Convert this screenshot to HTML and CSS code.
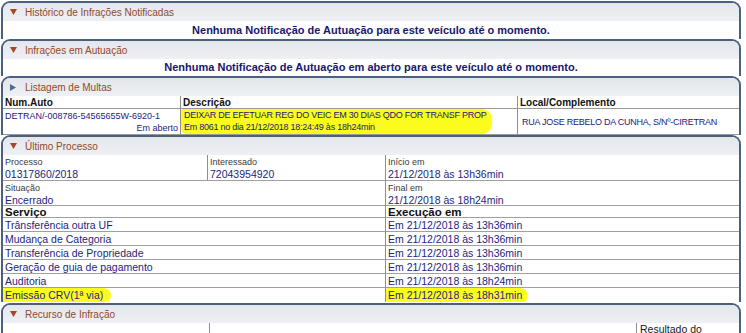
FILE: index.html
```html
<!DOCTYPE html>
<html lang="pt-BR">
<head>
<meta charset="utf-8">
<title>Consulta de Veículo</title>
<link rel="stylesheet" href="styles.css">
</head>
<body>
<div class="page">
  <section class="panel p1">
    <div class="ph"><svg class="tri" viewBox="0 0 7 6"><polygon points="0,0 7,0 3.5,6"/></svg><span>Histórico de Infrações Notificadas</span></div>
    <div class="msg m1">Nenhuma Notificação de Autuação para este veículo até o momento.</div>
  </section>
  <section class="panel">
    <div class="ph"><svg class="tri" viewBox="0 0 7 6"><polygon points="0,0 7,0 3.5,6"/></svg><span>Infrações em Autuação</span></div>
    <div class="msg">Nenhuma Notificação de Autuação em aberto para este veículo até o momento.</div>
  </section>
  <section class="panel">
    <div class="ph"><svg class="tri tri-r" viewBox="0 0 6 7"><polygon points="0,0 6,3.5 0,7"/></svg><span>Listagem de Multas</span></div>
    <div class="mt">
      <div class="mt-h">Num.Auto</div>
      <div class="mt-h vl">Descrição</div>
      <div class="mt-h vl">Local/Complemento</div>
      <div class="mt-c auto"><div>DETRAN/-008786-54565655W-6920-1</div><div class="right">Em aberto</div></div>
      <div class="mt-c vl desc"><span class="hl hl-desc">DEIXAR DE EFETUAR REG DO VEIC EM 30 DIAS QDO FOR TRANSF PROP<br>Em 8061 no dia 21/12/2018 18:24:49 às 18h24min</span></div>
      <div class="mt-c vl local">RUA JOSE REBELO DA CUNHA, S/Nº-CIRETRAN</div>
    </div>
  </section>
  <section class="panel">
    <div class="ph"><svg class="tri" viewBox="0 0 7 6"><polygon points="0,0 7,0 3.5,6"/></svg><span>Último Processo</span></div>
    <div class="pt">
      <div class="pc r-info"><div class="lbl">Processo</div><div class="val">01317860/2018</div></div>
      <div class="pc r-info vl"><div class="lbl">Interessado</div><div class="val">72043954920</div></div>
      <div class="pc r-info vl"><div class="lbl">Início em</div><div class="val">21/12/2018 às 13h36min</div></div>

      <div class="pc r-info r-two span2"><div class="lbl">Situação</div><div class="val">Encerrado</div></div>
      <div class="pc r-info r-two vl"><div class="lbl">Final em</div><div class="val">21/12/2018 às 18h24min</div></div>

      <div class="pc r-head span2">Serviço</div>
      <div class="pc r-head vl">Execução em</div>

      <div class="pc r-data span2">Trânsferência outra UF</div>
      <div class="pc r-data vl">Em 21/12/2018 às 13h36min</div>
      <div class="pc r-data span2">Mudança de Categoria</div>
      <div class="pc r-data vl">Em 21/12/2018 às 13h36min</div>
      <div class="pc r-data span2">Transferência de Propriedade</div>
      <div class="pc r-data vl">Em 21/12/2018 às 13h36min</div>
      <div class="pc r-data span2">Geração de guia de pagamento</div>
      <div class="pc r-data vl">Em 21/12/2018 às 13h36min</div>
      <div class="pc r-data span2">Auditoria</div>
      <div class="pc r-data vl">Em 21/12/2018 às 18h24min</div>
      <div class="pc r-data span2 last"><span class="hl hl-emi">Emissão CRV(1ª via)</span></div>
      <div class="pc r-data vl last"><span class="hl hl-exe">Em 21/12/2018 às 18h31min</span></div>
    </div>
  </section>
  <section class="panel p5">
    <div class="ph"><svg class="tri" viewBox="0 0 7 6"><polygon points="0,0 7,0 3.5,6"/></svg><span>Recurso de Infração</span></div>
    <div class="rt">
      <div class="rc"></div>
      <div class="rc vl"></div>
      <div class="rc vl res">Resultado do</div>
    </div>
  </section>
</div>
</body>
</html>
```
FILE: styles.css
```css
* { box-sizing: border-box; }
body {
  margin: 0;
  background: #fff;
  font-family: "Liberation Sans", Arial, sans-serif;
}
.page {
  width: 741px;
  padding: 1px 0 0 1px;
}
.panel {
  border: 2px solid #4b5f7f;
  border-bottom: 0;
  border-radius: 9px 9px 0 0;
  background: #fff;
  overflow: hidden;
}
.ph {
  height: 18px;
  display: flex;
  align-items: center;
  padding-left: 7px;
  gap: 8px;
  background: linear-gradient(#e3e7eb, #eef0f3);
  color: #94482a;
  font-size: 10px;
}
.tri {
  width: 7px;
  height: 6px;
  fill: #a3472a;
  flex: none;
}
.tri-r {
  width: 6px;
  height: 7px;
  fill: #4f6a93;
  margin-right: 1px;
}
.msg {
  height: 17px;
  line-height: 17px;
  text-align: center;
  font-weight: bold;
  font-size: 11px;
  color: #17186b;
}
.m1 { height: 18px; line-height: 19px; }

.vl { border-left: 1px solid #8e8e8e; }

/* Multas table */
.mt {
  display: grid;
  grid-template-columns: 177px 337px 1fr;
  border-bottom: 1px solid #9a9a9a;
}
.mt-h {
  height: 13px;
  line-height: 13px;
  padding-left: 2px;
  font-size: 10px;
  font-weight: bold;
  color: #111;
  border-bottom: 1px solid #9a9a9a;
}
.mt-c {
  height: 25px;
  padding: 1px 2px 0;
  font-size: 9px;
  line-height: 12px;
  color: #1d2280;
}
.mt-c .right { text-align: right; }
.desc { padding-left: 0; letter-spacing: -0.25px; }
.local {
  display: flex;
  align-items: center;
  padding-left: 4px;
  letter-spacing: -0.25px;
}
.hl { background: #fbfb1e; }
.hl-desc {
  display: inline-block;
  padding: 0 6px 1px 3px;
  margin-top: -1px;
  border-radius: 3px 10px 10px 6px;
  color: #1a1a6a;
}

/* Processo table */
.pt {
  display: grid;
  grid-template-columns: 204px 178px 1fr;
  color: #1d2580;
}
.pc {
  border-bottom: 1px solid #a0a0a0;
  padding-left: 2px;
}
.span2 { grid-column: span 2; }
.r-info {
  height: 26px;
  padding-top: 2px;
}
.r-two { height: 25px; padding-top: 2px; }
.lbl {
  font-size: 9px;
  line-height: 11px;
  color: #3a3a3a;
}
.val {
  font-size: 10.5px;
  line-height: 12px;
}
.r-head {
  height: 12px;
  font-size: 11.5px;
  line-height: 12px;
  font-weight: bold;
  color: #111;
}
.r-data {
  height: 14px;
  font-size: 10.5px;
  line-height: 14px;
}
.last { border-bottom: 0; }
.hl-emi {
  display: inline-block;
  margin-left: -2px;
  padding: 0 8px 0 2px;
  border-radius: 2px 10px 8px 2px;
}
.hl-exe {
  display: inline-block;
  margin-left: -2px;
  padding: 0 5px 0 2px;
  border-radius: 2px 6px 4px 2px;
}
.p5 { margin-top: 1px; }

/* Recurso table */
.rt {
  display: grid;
  grid-template-columns: 206px 427px 1fr;
}
.rc {
  height: 12px;
  padding: 0 3px;
  font-size: 10.5px;
  line-height: 12px;
  color: #1a1a1a;
}
```
